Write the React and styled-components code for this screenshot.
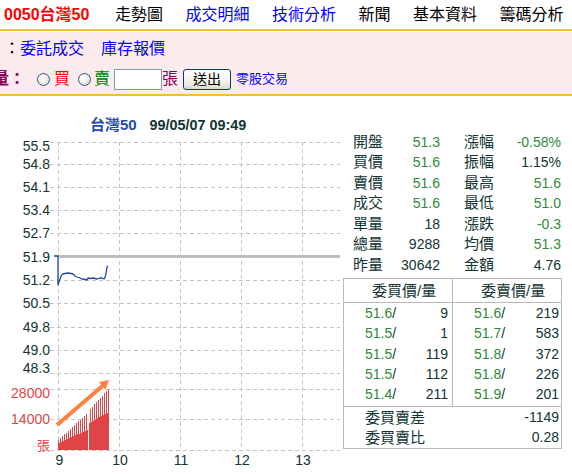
import React from 'react';
import styled, { createGlobalStyle } from 'styled-components';

const FONT = `"Liberation Sans", "Noto Sans CJK TC", sans-serif`;
const DARK = '#123434';
const GREEN = '#2f8a3c';
const BLUE = '#0000ff';

const Global = createGlobalStyle`
  html, body { margin: 0; padding: 0; background: #fff; }
  body { font-family: ${FONT}; overflow: hidden; }
`;

const Page = styled.div`
  width: 572px;
  height: 474px;
  overflow: hidden;
  display: flex;
  flex-direction: column;
`;

const Nav = styled.nav`
  display: flex;
  align-items: center;
  height: 29px;
  padding-left: 4px;
  gap: 22.5px;
  font-size: 16px;
  line-height: 20px;
  white-space: nowrap;
`;

const Brand = styled.span`
  color: #ff0000;
  font-weight: bold;
  margin-right: 3px;
`;

const NavItem = styled.span`
  color: ${p => (p.$link ? BLUE : '#000')};
`;

const GoldRule = styled.div`
  height: 2px;
  background: #f2c02c;
  flex: none;
  margin-bottom: ${p => p.$gap || 0}px;
`;

const Panel = styled.div`
  background: #fcebec;
  height: 62px;
  padding: 6px 0 4px;
  box-sizing: border-box;
  display: flex;
  flex-direction: column;
  gap: 8px;
  overflow: hidden;
`;

const PanelRow = styled.div`
  display: flex;
  align-items: center;
  height: 22px;
  font-size: 16px;
  line-height: 22px;
  white-space: nowrap;
  margin-left: ${p => p.$shift}px;
`;

const Plain = styled.span`
  color: #000;
`;

const Link = styled.span`
  color: ${BLUE};
  font-size: ${p => p.$size || 16}px;
  margin-left: ${p => p.$ml || 0}px;
`;

const Prompt = styled.span`
  color: #880058;
  font-weight: bold;
`;

const Radio = styled.input.attrs({ type: 'radio' })`
  appearance: none;
  -webkit-appearance: none;
  margin: 0 0 0 ${p => p.$ml}px;
  width: 13px;
  height: 13px;
  border-radius: 50%;
  box-sizing: border-box;
  border: 1px solid #2a5a8a;
  background: radial-gradient(circle at 35% 35%, #ffffff 0%, #ecece6 55%, #c9cbc4 100%);
`;

const Choice = styled.span`
  color: ${p => p.$color};
  margin-left: ${p => p.$ml}px;
`;

const QtyInput = styled.input`
  width: 48px;
  height: 21px;
  box-sizing: border-box;
  border: 1px solid #7f9db9;
  margin: 0 0 0 4px;
  padding: 0;
  background: #fff;
`;

const Unit = styled.span`
  color: #880058;
`;

const SendButton = styled.button`
  width: 48px;
  height: 21px;
  margin-left: 5px;
  box-sizing: border-box;
  border: 1px solid #003c74;
  border-radius: 3px;
  background: linear-gradient(#ffffff, #f0efe6 70%, #dcd9c8);
  font-family: ${FONT};
  font-size: 14px;
  line-height: 17px;
  padding: 0;
  color: #000;
`;

const Main = styled.div`
  display: flex;
  flex: 1;
`;

const ChartSvg = styled.svg`
  flex: none;
  display: block;
`;

const Side = styled.div`
  display: flex;
  flex-direction: column;
  padding-top: 35.4px;
  margin-left: 3px;
`;

const Stats = styled.div`
  display: grid;
  grid-template-columns: 40px 47px 64px 57px;
  grid-auto-rows: 20.55px;
  align-items: center;
  margin-left: 10px;
`;

const StatLabel = styled.span`
  font-size: 15px;
  line-height: 20px;
  color: ${DARK};
  padding-left: ${p => (p.$second ? 24 : 0)}px;
`;

const StatValue = styled.span`
  font-size: 14px;
  line-height: 20px;
  text-align: right;
  color: ${p => p.$color};
`;

const Book = styled.div`
  margin-top: 2.7px;
  width: 219px;
  box-sizing: border-box;
  border: 1px solid #b8b8b8;
  color: ${DARK};
`;

const BookGrid = styled.div`
  display: grid;
  grid-template-columns: 109px 1fr;
  border-bottom: 1px solid #b8b8b8;
`;

const HeadCell = styled.div`
  height: 23px;
  line-height: 23px;
  font-size: 15px;
  padding-left: 28px;
  border-right: ${p => (p.$first ? '1px solid #b8b8b8' : 'none')};
`;

const BookCol = styled.div`
  display: flex;
  flex-direction: column;
  padding-bottom: 1.5px;
  border-right: ${p => (p.$first ? '1px solid #b8b8b8' : 'none')};
`;

const BookRow = styled.div`
  display: flex;
  align-items: center;
  justify-content: space-between;
  height: 20.3px;
  font-size: 14px;
  padding: 0 ${p => p.$pr}px 0 21px;
`;

const Price = styled.span`
  color: ${GREEN};
`;

const Slash = styled.span`
  color: ${DARK};
`;

const Summary = styled.div`
  display: flex;
  flex-direction: column;
  padding-bottom: 1px;
`;

const SumRow = styled.div`
  display: flex;
  align-items: center;
  justify-content: space-between;
  height: 20px;
  padding: 0 2px 0 21px;
`;

const SumLabel = styled.span`
  font-size: 15px;
`;

const SumValue = styled.span`
  font-size: 14px;
`;

const stats = [
  ['開盤', '51.3', GREEN, '漲幅', '-0.58%', GREEN],
  ['買價', '51.6', GREEN, '振幅', '1.15%', DARK],
  ['賣價', '51.6', GREEN, '最高', '51.6', GREEN],
  ['成交', '51.6', GREEN, '最低', '51.0', GREEN],
  ['單量', '18', DARK, '漲跌', '-0.3', GREEN],
  ['總量', '9288', DARK, '均價', '51.3', GREEN],
  ['昨量', '30642', DARK, '金額', '4.76', DARK],
];

const bids = [['51.6', '9'], ['51.5', '1'], ['51.5', '119'], ['51.5', '112'], ['51.4', '211']];
const asks = [['51.6', '219'], ['51.7', '583'], ['51.8', '372'], ['51.8', '226'], ['51.9', '201']];

const hLines = [142, 164, 187, 210, 233, 280, 303, 327, 350, 373, 389, 419, 450];
const vLines = [58, 119, 180, 241, 302];
const yLabels = [
  ['55.5', 145.5], ['54.8', 163.5], ['54.1', 187], ['53.4', 210], ['52.7', 233],
  ['51.9', 257], ['51.2', 280], ['50.5', 303], ['49.8', 327], ['49.0', 350], ['48.3', 368],
];
const volLabels = [['28000', 393], ['14000', 419]];
const xLabels = [['9', 59.5], ['10', 120], ['11', 181], ['12', 242], ['13', 303]];

const pricePath =
  'M54,256 L58,256 L58,285 L60,279 L61.7,275 L63,274 L65,273.5 L68,273 L71,273.5 L73,274 L75,276 L77,277 L80,278 L82,279 L85,279.5 L87,280 L88,278 L90,278.5 L93,278 L95,278.5 L97,279 L100,278 L102,278 L104,279 L105.5,276 L106,273 L107,267 L108,266';

function volumeBars() {
  const out = [];
  for (let x = 58; x <= 108; x++) {
    if (x === 88) continue;
    let base;
    let spike;
    if (x < 88) {
      base = 443 - ((x - 58) * 13) / 29;
      spike = 440 - ((x - 58) * 27) / 29;
    } else {
      base = 423 - ((x - 89) * 11) / 19;
      spike = 410 - ((x - 89) * 21) / 19;
    }
    const top = x % 2 === 0 ? spike : base;
    out.push(<rect key={x} x={x} y={top} width={1} height={450 - top} />);
  }
  return out;
}

function Chart() {
  return (
    <ChartSvg width="340" height="378" viewBox="0 96 340 378">
      <text x="90" y="130" fontFamily={FONT} fontWeight="bold" fontSize="15" fill="#1f4aa8">台灣50</text>
      <text x="149.5" y="130" fontFamily={FONT} fontWeight="bold" fontSize="14.4" fill="#123434">99/05/07 09:49</text>
      <g stroke="#c4c4c4" strokeWidth="1" strokeDasharray="4 3" shapeRendering="crispEdges">
        {hLines.map(y => (
          <line key={'h' + y} x1="50" y1={y + 0.5} x2="340" y2={y + 0.5} />
        ))}
        {vLines.map(x => (
          <line key={'v' + x} x1={x + 0.5} y1="142" x2={x + 0.5} y2="451" />
        ))}
      </g>
      <line x1="58" y1="256.5" x2="340" y2="256.5" stroke="#bdbdbd" strokeWidth="3" />
      <path d={pricePath} fill="none" stroke="#1f45a6" strokeWidth="1.3" strokeLinejoin="round" />
      <g fill="#e04446" shapeRendering="crispEdges">{volumeBars()}</g>
      <g>
        <line x1="57" y1="425" x2="102.5" y2="386" stroke="#ff8040" strokeWidth="4" />
        <polygon points="109,380 105.5,389.7 98.9,382.1" fill="#ff8040" />
      </g>
      <g fontFamily={FONT} fontSize="14" textAnchor="end">
        {yLabels.map(([t, y]) => (
          <text key={t} x="50" y={y + 5} fill="#123434">{t}</text>
        ))}
        {volLabels.map(([t, y]) => (
          <text key={t} x="50" y={y + 5} fill="#e04446">{t}</text>
        ))}
        <text x="50" y="450" fontSize="13" fill="#e04446">張</text>
      </g>
      <g fontFamily={FONT} fontSize="14" textAnchor="middle" fill="#123434">
        {xLabels.map(([t, x]) => (
          <text key={t} x={x} y="465">{t}</text>
        ))}
      </g>
    </ChartSvg>
  );
}

export default function App() {
  return (
    <Page>
      <Global />
      <Nav>
        <Brand>0050台灣50</Brand>
        <NavItem>走勢圖</NavItem>
        <NavItem $link>成交明細</NavItem>
        <NavItem $link>技術分析</NavItem>
        <NavItem>新聞</NavItem>
        <NavItem>基本資料</NavItem>
        <NavItem>籌碼分析</NavItem>
      </Nav>
      <GoldRule $gap={1} />
      <Panel>
        <PanelRow $shift={4}>
          <Plain>：</Plain>
          <Link>委託成交</Link>
          <Link $ml={17}>庫存報價</Link>
        </PanelRow>
        <PanelRow $shift={-7}>
          <Prompt>量：</Prompt>
          <Radio name="side" $ml={12} />
          <Choice $color="#ff0000" $ml={4}>買</Choice>
          <Radio name="side" $ml={8} />
          <Choice $color="#008000" $ml={3}>賣</Choice>
          <QtyInput />
          <Unit>張</Unit>
          <SendButton>送出</SendButton>
          <Link $size={13} $ml={5}>零股交易</Link>
        </PanelRow>
      </Panel>
      <GoldRule />
      <Main>
        <Chart />
        <Side>
          <Stats>
            {stats.map(([l1, v1, c1, l2, v2, c2]) => (
              <React.Fragment key={l1}>
                <StatLabel>{l1}</StatLabel>
                <StatValue $color={c1}>{v1}</StatValue>
                <StatLabel $second>{l2}</StatLabel>
                <StatValue $color={c2}>{v2}</StatValue>
              </React.Fragment>
            ))}
          </Stats>
          <Book>
            <BookGrid>
              <HeadCell $first>委買價/量</HeadCell>
              <HeadCell>委賣價/量</HeadCell>
            </BookGrid>
            <BookGrid>
              <BookCol $first>
                {bids.map(([p, q], i) => (
                  <BookRow key={i} $pr={4}>
                    <span><Price>{p}</Price><Slash>/</Slash></span>
                    <span>{q}</span>
                  </BookRow>
                ))}
              </BookCol>
              <BookCol>
                {asks.map(([p, q], i) => (
                  <BookRow key={i} $pr={2}>
                    <span><Price>{p}</Price><Slash>/</Slash></span>
                    <span>{q}</span>
                  </BookRow>
                ))}
              </BookCol>
            </BookGrid>
            <Summary>
              <SumRow>
                <SumLabel>委買賣差</SumLabel>
                <SumValue>-1149</SumValue>
              </SumRow>
              <SumRow>
                <SumLabel>委買賣比</SumLabel>
                <SumValue>0.28</SumValue>
              </SumRow>
            </Summary>
          </Book>
        </Side>
      </Main>
    </Page>
  );
}
